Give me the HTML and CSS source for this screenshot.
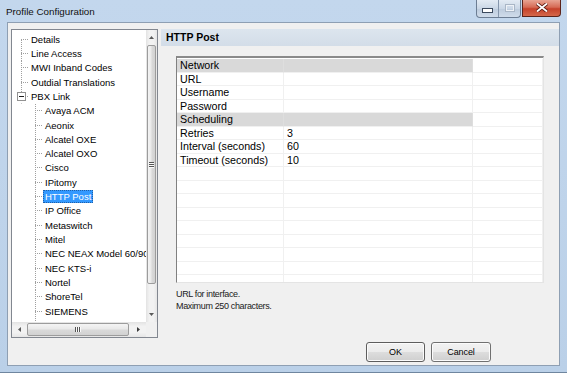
FILE: index.html
```html
<!DOCTYPE html>
<html lang="en">
<head>
<meta charset="UTF-8" />
<meta name="viewport" content="width=device-width, initial-scale=1" />
<title>Profile Configuration</title>
<link rel="stylesheet" href="styles.css">
</head>
<body>
<div class="window">
  <div class="titlebar">
    <span class="title">Profile Configuration</span>
    <div class="controls">
      <div class="ctl-group">
        <span class="ctl ctl-min">
          <svg width="11" height="5" viewBox="0 0 11 5"><rect x="0.5" y="0.5" width="10" height="4" fill="#fff" stroke="#3b4a5e"/></svg>
        </span>
        <span class="ctl ctl-max">
          <svg width="10" height="8" viewBox="0 0 10 8"><rect x="0.5" y="0.5" width="9" height="7" fill="none" stroke="#a9b6c6"/><rect x="1.5" y="1.5" width="7" height="5" fill="none" stroke="#eef2f7"/></svg>
        </span>
      </div>
      <span class="ctl ctl-close">
        <svg width="12" height="9" viewBox="0 0 12 9"><path d="M1 0.5 L11 8.5 M11 0.5 L1 8.5" stroke="#5a1a12" stroke-width="3.4"/><path d="M1 0.5 L11 8.5 M11 0.5 L1 8.5" stroke="#fff" stroke-width="1.8"/></svg>
      </span>
    </div>
  </div>

  <div class="client">
    <div class="main">
      <div class="tree-box">
        <div class="tree-view">
          <div class="row root first"><span class="stub"></span><span class="label">Details</span></div>
          <div class="row root"><span class="stub"></span><span class="label">Line Access</span></div>
          <div class="row root"><span class="stub"></span><span class="label">MWI Inband Codes</span></div>
          <div class="row root"><span class="stub"></span><span class="label">Outdial Translations</span></div>
          <div class="row root last"><span class="stub"><span class="box"></span></span><span class="label">PBX Link</span></div>
          <div class="row child"><span class="stub"></span><span class="label">Avaya ACM</span></div>
          <div class="row child"><span class="stub"></span><span class="label">Aeonix</span></div>
          <div class="row child"><span class="stub"></span><span class="label">Alcatel OXE</span></div>
          <div class="row child"><span class="stub"></span><span class="label">Alcatel OXO</span></div>
          <div class="row child"><span class="stub"></span><span class="label">Cisco</span></div>
          <div class="row child"><span class="stub"></span><span class="label">IPitomy</span></div>
          <div class="row child"><span class="stub"></span><span class="label selected">HTTP Post</span></div>
          <div class="row child"><span class="stub"></span><span class="label">IP Office</span></div>
          <div class="row child"><span class="stub"></span><span class="label">Metaswitch</span></div>
          <div class="row child"><span class="stub"></span><span class="label">Mitel</span></div>
          <div class="row child"><span class="stub"></span><span class="label">NEC NEAX Model 60/90</span></div>
          <div class="row child"><span class="stub"></span><span class="label">NEC KTS-i</span></div>
          <div class="row child"><span class="stub"></span><span class="label">Nortel</span></div>
          <div class="row child"><span class="stub"></span><span class="label">ShoreTel</span></div>
          <div class="row child"><span class="stub"></span><span class="label">SIEMENS</span></div>
          <div class="row child"><span class="stub"></span></div>
        </div>
        <div class="vscroll">
          <span class="sb-btn">
            <svg width="5" height="3" viewBox="0 0 5 3"><path d="M0 3 L2.5 0 L5 3 Z" fill="#5a5a5a"/></svg>
          </span>
          <span class="vthumb"><span class="grip-h"></span></span>
          <span class="sb-track"></span>
          <span class="sb-btn">
            <svg width="5" height="3" viewBox="0 0 5 3"><path d="M0 0 L2.5 3 L5 0 Z" fill="#5a5a5a"/></svg>
          </span>
        </div>
        <div class="hscroll">
          <span class="sb-btn">
            <svg width="3" height="5" viewBox="0 0 3 5"><path d="M3 0 L0 2.5 L3 5 Z" fill="#5a5a5a"/></svg>
          </span>
          <span class="hthumb"><span class="grip-v"></span></span>
          <span class="sb-track"></span>
          <span class="sb-btn">
            <svg width="3" height="5" viewBox="0 0 3 5"><path d="M0 0 L3 2.5 L0 5 Z" fill="#3a3a3a"/></svg>
          </span>
        </div>
        <div class="corner"></div>
      </div>

      <div class="panel">
        <div class="panel-head">HTTP Post</div>
        <div class="props">
          <div class="cell cat">Network</div><div class="cell cat"></div><div class="cell"></div>
          <div class="cell">URL</div><div class="cell"></div><div class="cell"></div>
          <div class="cell">Username</div><div class="cell"></div><div class="cell"></div>
          <div class="cell">Password</div><div class="cell"></div><div class="cell"></div>
          <div class="cell cat">Scheduling</div><div class="cell cat"></div><div class="cell"></div>
          <div class="cell">Retries</div><div class="cell">3</div><div class="cell"></div>
          <div class="cell">Interval (seconds)</div><div class="cell">60</div><div class="cell"></div>
          <div class="cell">Timeout (seconds)</div><div class="cell">10</div><div class="cell"></div>
          <div class="cell"></div><div class="cell"></div><div class="cell"></div>
          <div class="cell"></div><div class="cell"></div><div class="cell"></div>
          <div class="cell"></div><div class="cell"></div><div class="cell"></div>
          <div class="cell"></div><div class="cell"></div><div class="cell"></div>
          <div class="cell"></div><div class="cell"></div><div class="cell"></div>
          <div class="cell"></div><div class="cell"></div><div class="cell"></div>
          <div class="cell"></div><div class="cell"></div><div class="cell"></div>
          <div class="cell"></div><div class="cell"></div><div class="cell"></div>
          <div class="cell"></div><div class="cell"></div><div class="cell"></div>
        </div>
        <div class="desc">URL for interface.<br>Maximum 250 characters.</div>
      </div>
    </div>

    <div class="footer">
      <button class="btn btn-default" type="button">OK</button>
      <button class="btn" type="button">Cancel</button>
    </div>
  </div>
</div>
</body>
</html>
```

FILE: styles.css
```css
/* Reset & Basic */
* {
  box-sizing: border-box;
}
html, body {
  margin: 0;
}
body {
  width: 567px;
  height: 373px;
  overflow: hidden;
  background: linear-gradient(to bottom, #c3d7ed, #bad0e8);
  font-family: "Liberation Sans", Arial, sans-serif;
  color: #000;
}
.window {
  height: 373px;
  display: flex;
  flex-direction: column;
  border-bottom: 1px solid #6f869f;
}

/* Title bar */
.titlebar {
  height: 22px;
  display: flex;
  justify-content: space-between;
  align-items: flex-start;
  padding-left: 6px;
  padding-right: 6px;
}
.title {
  font-size: 9.8px;
  line-height: 22px;
  padding-top: 1px;
  color: #111;
}
.controls {
  display: flex;
  gap: 1px;
}
.ctl-group {
  display: flex;
  border: 1px solid #6c7d93;
  border-top: none;
  border-radius: 0 0 4px 4px;
  overflow: hidden;
  background: linear-gradient(to bottom, #e3ebf4, #cad7e6 50%, #bccbdd 51%, #d0dcea);
}
.ctl {
  height: 17px;
  display: flex;
  align-items: center;
  justify-content: center;
}
.ctl-min {
  width: 22px;
  border-right: 1px solid #8596ac;
  padding-top: 4px;
}
.ctl-max {
  width: 21px;
  padding-bottom: 2px;
}
.ctl-close {
  width: 39px;
  border: 1px solid #5b231a;
  border-top: none;
  border-radius: 0 0 4px 0;
  background: linear-gradient(to bottom, #e8a493, #d66b55 45%, #c5412a 55%, #d4684a);
  padding-bottom: 2px;
}

/* Client area */
.client {
  flex: 1;
  margin: 0 7px 6px 7px;
  border: 1px solid #8e9fb3;
  background: #f0f0f0;
  display: flex;
  flex-direction: column;
}
.main {
  display: flex;
  height: 315px;
  padding-top: 6px;
}

/* Tree */
.tree-box {
  width: 147px;
  height: 309px;
  margin-left: 3px;
  border: 1px solid #828790;
  background: #fff;
  display: grid;
  grid-template-columns: 1fr 11px;
  grid-template-rows: 1fr 15px;
}
.tree-view {
  overflow: hidden;
  padding-top: 2px;
  font-size: 9.5px;
  white-space: nowrap;
}
.row {
  height: 14.32px;
  display: flex;
  align-items: center;
}
.root {
  padding-left: 9px;
}
.child {
  padding-left: 23px;
}
.stub {
  width: 8px;
  height: 100%;
  flex: none;
  display: flex;
  align-items: center;
  background:
    linear-gradient(to right, #a0a0a0 50%, transparent 50%) 0 50% / 2px 1px repeat-x,
    linear-gradient(to bottom, #a0a0a0 50%, transparent 50%) 0 0 / 1px 2px repeat-y;
}
.first .stub {
  background:
    linear-gradient(#fff, #fff) 0 0 / 1px 50% no-repeat,
    linear-gradient(to right, #a0a0a0 50%, transparent 50%) 0 50% / 2px 1px repeat-x,
    linear-gradient(to bottom, #a0a0a0 50%, transparent 50%) 0 0 / 1px 2px repeat-y;
}
.last .stub {
  background:
    linear-gradient(#fff, #fff) 0 100% / 1px 50% no-repeat,
    linear-gradient(to right, #a0a0a0 50%, transparent 50%) 0 50% / 2px 1px repeat-x,
    linear-gradient(to bottom, #a0a0a0 50%, transparent 50%) 0 0 / 1px 2px repeat-y;
}
.box {
  width: 9px;
  height: 9px;
  margin-left: -4px;
  border: 1px solid #919191;
  background:
    linear-gradient(#1e1e1e, #1e1e1e) center / 5px 1px no-repeat,
    #fff;
}
.label {
  padding: 0 2px;
  line-height: 13px;
  color: #000;
}
.label.selected {
  background: #3399ff;
  color: #fff;
  outline: 1px dotted #1f5fa8;
  outline-offset: -1px;
}

/* Scrollbars */
.vscroll {
  display: flex;
  flex-direction: column;
  background: linear-gradient(to right, #e3e3e3, #f2f2f2 30%, #f2f2f2 70%, #e6e6e6);
}
.hscroll {
  display: flex;
  background: linear-gradient(to bottom, #e3e3e3, #f2f2f2 30%, #f2f2f2 70%, #e6e6e6);
}
.sb-btn {
  flex: none;
  width: 15px;
  height: 15px;
  display: flex;
  align-items: center;
  justify-content: center;
}
.vscroll .sb-btn {
  width: 11px;
}
.sb-track {
  flex: 1;
}
.vthumb {
  flex: none;
  height: 239px;
  margin: 0 1px;
  border: 1px solid #9c9c9c;
  border-radius: 2px;
  background: linear-gradient(to right, #f4f4f4, #e9e9e9 45%, #d9d9d9 55%, #d2d2d2);
  display: flex;
  align-items: center;
  justify-content: center;
}
.hthumb {
  flex: none;
  width: 102px;
  margin: 1px 0;
  border: 1px solid #9c9c9c;
  border-radius: 2px;
  background: linear-gradient(to bottom, #f4f4f4, #e9e9e9 45%, #d9d9d9 55%, #d2d2d2);
  display: flex;
  align-items: center;
  justify-content: center;
}
.grip-h {
  width: 5px;
  height: 6px;
  background: repeating-linear-gradient(to bottom, #555 0 1px, #fafafa 1px 2px);
}
.grip-v {
  width: 6px;
  height: 5px;
  background: repeating-linear-gradient(to right, #555 0 1px, #fafafa 1px 2px);
}
.corner {
  background: #f0f0f0;
}

/* Right panel */
.panel {
  flex: 1;
  margin-left: 3px;
  display: flex;
  flex-direction: column;
}
.panel-head {
  height: 17px;
  padding-left: 5px;
  font-size: 10.5px;
  font-weight: 700;
  line-height: 17px;
  background: linear-gradient(to bottom, #dce5ee, #d3dde8);
}
.props {
  width: 368px;
  height: 227px;
  margin: 10px 0 0 15px;
  padding-top: 1px;
  border-style: solid;
  border-width: 2px 1px 1px 1px;
  border-color: #8a8a8a #e4e4e4 #e4e4e4 #808080;
  background: #fff;
  overflow: hidden;
  display: grid;
  grid-template-columns: 107px 189px 1fr;
  grid-auto-rows: 13.5px;
}
.cell {
  border-right: 1px solid #f0f0f0;
  border-bottom: 1px solid #f0f0f0;
  padding-left: 3px;
  font-size: 10.7px;
  line-height: 12.5px;
  white-space: nowrap;
  overflow: hidden;
}
.cell.cat {
  background: #d9d9d9;
  border-right-color: #dedede;
}
.desc {
  margin: 5px 0 0 15px;
  font-size: 9px;
  line-height: 12px;
  letter-spacing: -0.35px;
  color: #1a1a1a;
}

/* Buttons */
.footer {
  display: flex;
  justify-content: flex-end;
  gap: 6px;
  margin-top: 4px;
  padding-right: 68px;
}
.btn {
  width: 59px;
  height: 20px;
  padding: 0;
  font-family: "Liberation Sans", Arial, sans-serif;
  font-size: 9px;
  letter-spacing: -0.1px;
  color: #000;
  border: 1px solid #707070;
  border-radius: 3px;
  background: linear-gradient(to bottom, #f2f2f2, #ebebeb 50%, #dddddd 50%, #cfcfcf);
  box-shadow: inset 0 0 0 1px #fbfbfb;
}
.btn:last-child {
  width: 60px;
}
.btn-default {
  border-color: #5d5d5d;
}
```
